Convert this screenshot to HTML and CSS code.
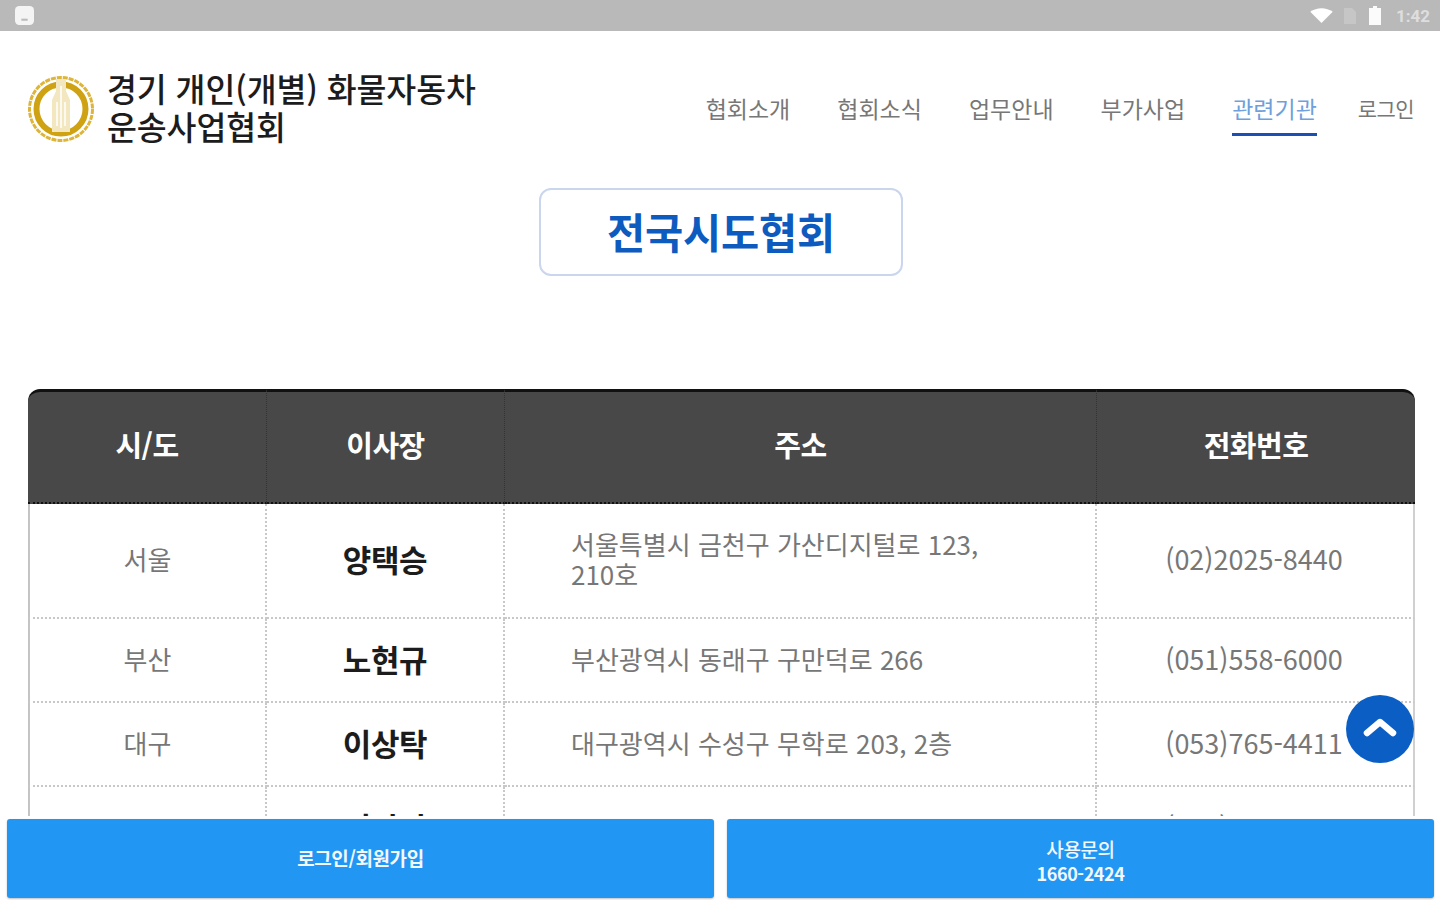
FILE: index.html
```html
<!DOCTYPE html>
<html lang="ko">
<head>
<meta charset="UTF-8">
<meta name="viewport" content="width=device-width, initial-scale=1.0">
<title>전국시도협회</title>
<link rel="stylesheet" href="styles.css">
</head>
<body>
<div class="status-bar">
  <svg class="status-app" viewBox="0 0 18 18"><rect x="0" y="0" width="18" height="18" rx="4" fill="#f4f4f4"/><rect x="6" y="12" width="6" height="2" fill="#bbb"/></svg>
  <div class="status-right">
    <svg class="status-wifi" viewBox="0 0 24 16"><path d="M0 4 C7 -1 17 -1 24 4 L12 16 Z" fill="#fff"/></svg>
    <svg class="status-sim" viewBox="0 0 14 16"><path d="M1 0 H9 L13 4 V16 H1 Z" fill="#c6c6c6"/></svg>
    <svg class="status-batt" viewBox="0 0 12 19"><path d="M4 0 H8 V2 H12 V19 H0 V2 H4 Z" fill="#fbfbfb"/></svg>
    <span class="status-time">1:42</span>
  </div>
</div>

<header class="header">
  <div class="brand">
    <svg class="logo" viewBox="0 0 66 66">
      <circle cx="33" cy="33" r="31.5" fill="none" stroke="#dcb53a" stroke-width="3" stroke-dasharray="5 1"/>
      <circle cx="33" cy="33" r="24.5" fill="#fff" stroke="#cfa214" stroke-width="6"/>
      <path d="M28 3 H38 V15 L42 24 V56 H24 V24 L28 15 Z" fill="#f3e7c0"/>
      <path d="M33 10 V52 M29 26 V50 M37 26 V50" stroke="#fff" stroke-width="1.5" fill="none"/>
    </svg>
    <h1 class="brand-name">경기 개인(개별) 화물자동차<br>운송사업협회</h1>
  </div>
  <nav class="nav">
    <a class="nav-item">협회소개</a>
    <a class="nav-item">협회소식</a>
    <a class="nav-item">업무안내</a>
    <a class="nav-item">부가사업</a>
    <a class="nav-item active">관련기관</a>
    <a class="nav-item login">로그인</a>
  </nav>
</header>

<main class="content">
  <div class="title-wrap">
    <h2 class="page-title">전국시도협회</h2>
  </div>
  <table class="assoc-table">
    <colgroup>
      <col class="col-region"><col class="col-name"><col class="col-addr"><col class="col-tel">
    </colgroup>
    <thead>
      <tr><th>시/도</th><th>이사장</th><th>주소</th><th>전화번호</th></tr>
    </thead>
    <tbody>
      <tr class="row-tall">
        <td>서울</td><td class="name">양택승</td>
        <td class="addr">서울특별시 금천구 가산디지털로 123,<br>210호</td>
        <td class="tel">(02)2025-8440</td>
      </tr>
      <tr>
        <td>부산</td><td class="name">노현규</td>
        <td class="addr">부산광역시 동래구 구만덕로 266</td>
        <td class="tel">(051)558-6000</td>
      </tr>
      <tr>
        <td>대구</td><td class="name">이상탁</td>
        <td class="addr">대구광역시 수성구 무학로 203, 2층</td>
        <td class="tel">(053)765-4411</td>
      </tr>
      <tr>
        <td>인천</td><td class="name">이사장</td>
        <td class="addr"></td>
        <td class="tel">(032)000-0000</td>
      </tr>
    </tbody>
  </table>
  <button class="top-btn" aria-label="맨 위로">
    <svg viewBox="0 0 36 24" width="36" height="24"><path d="M5 16 L18 5 L31 16" fill="none" stroke="#fff" stroke-width="6.5" stroke-linecap="round" stroke-linejoin="round"/></svg>
  </button>
</main>

<footer class="bottom-bar">
  <a class="bottom-btn">로그인/회원가입</a>
  <a class="bottom-btn"><span class="btn-light">사용문의</span><br>1660-2424</a>
</footer>
</body>
</html>
```

FILE: styles.css
```css
html, body {
  margin: 0;
  height: 100%;
}
body {
  font-family: "Noto Sans CJK KR", "Noto Sans", sans-serif;
  background-color: #fff;
  display: flex;
  flex-direction: column;
  height: 900px;
  overflow: hidden;
}

/* status bar */
.status-bar {
  height: 31px;
  flex: none;
  background-color: #b9b9b9;
  display: flex;
  justify-content: space-between;
  align-items: center;
  padding: 0 10px 0 15px;
}
.status-app {
  width: 19px;
  height: 19px;
}
.status-right {
  display: flex;
  align-items: center;
}
.status-wifi {
  width: 23px;
  height: 15px;
}
.status-sim {
  width: 14px;
  height: 16px;
  margin-left: 10px;
}
.status-batt {
  width: 12px;
  height: 19px;
  margin-left: 12px;
}
.status-time {
  font-family: Roboto, sans-serif;
  font-size: 17px;
  font-weight: 700;
  color: #dedede;
  margin-left: 15px;
}

/* header */
.header {
  flex: none;
  height: 157px;
  box-sizing: border-box;
  display: flex;
  justify-content: space-between;
  padding: 38px 26px 0 28px;
}
.brand {
  display: flex;
  align-items: flex-start;
  gap: 13px;
  padding-top: 7px;
}
.logo {
  width: 66px;
  height: 66px;
  flex: none;
}
.brand-name {
  margin: -7px 0 0;
  font-size: 32.5px;
  line-height: 38px;
  font-weight: 500;
  color: #1c1c1c;
  letter-spacing: -0.1px;
}
.nav {
  display: flex;
  gap: 47px;
  padding-top: 23px;
  align-items: flex-start;
}
.nav-item {
  font-size: 23px;
  line-height: 32px;
  height: 44px;
  color: #777;
  box-sizing: border-box;
}
.nav-item.active {
  color: #6f9fdc;
  border-bottom: 3px solid #1a4fb4;
}
.nav-item.login {
  font-size: 21px;
  letter-spacing: -0.6px;
  margin-left: -6px;
}

/* content */
.content {
  flex: 1;
  min-height: 0;
  overflow: hidden;
  position: relative;
  padding: 0 25px 0 28px;
}
.title-wrap {
  display: flex;
  justify-content: center;
  margin-right: 1px;
  margin-bottom: 113px;
}
.page-title {
  margin: 0;
  width: 364px;
  height: 88px;
  box-sizing: border-box;
  border: 2px solid #c9d6ee;
  border-radius: 12px;
  text-align: center;
  font-size: 41.5px;
  line-height: 82px;
  font-weight: 700;
  color: #0e5bc0;
  letter-spacing: -0.2px;
}
.assoc-table {
  width: 1387px;
  table-layout: fixed;
  border-collapse: separate;
  border-spacing: 0;
  border-radius: 12px 12px 0 0;
  font-size: 26px;
  color: #777;
}
.col-region { width: 239px; }
.col-name { width: 238px; }
.col-addr { width: 592px; }
.assoc-table th {
  height: 115px;
  box-sizing: border-box;
  padding: 0 0 6px;
  background-color: #484848;
  color: #fff;
  font-size: 29px;
  font-weight: 700;
  letter-spacing: -0.5px;
  border-top: 3px solid #111;
  border-bottom: 2px dotted #111;
  border-right: 1px dotted #333;
}
.assoc-table th:first-child {
  border-top-left-radius: 12px;
}
.assoc-table th:last-child {
  border-top-right-radius: 12px;
  border-right: none;
}
.assoc-table td {
  height: 84px;
  box-sizing: border-box;
  text-align: center;
  border-bottom: 2px dotted #c8c8c8;
  border-right: 2px dotted #c8c8c8;
  line-height: 30px;
  padding: 0 0 3px;
}
.assoc-table td:first-child {
  border-left: 2px solid #c4c4c4;
}
.assoc-table td:last-child {
  border-right: 2px solid #d0d0d0;
}
.assoc-table .row-tall td {
  height: 115px;
}
.assoc-table .name {
  font-size: 31px;
  font-weight: 700;
  letter-spacing: -0.3px;
  color: #1c1c1c;
}
.assoc-table .addr {
  text-align: left;
  padding-left: 66px;
  padding-right: 40px;
}
.assoc-table .tel {
  font-size: 27px;
  padding-right: 2px;
}
.top-btn {
  position: absolute;
  right: 26px;
  top: 507px;
  width: 68px;
  height: 68px;
  padding: 0;
  border: none;
  border-radius: 50%;
  background-color: #0b5fc4;
  display: flex;
  align-items: center;
  justify-content: center;
}

/* bottom buttons */
.bottom-bar {
  flex: none;
  height: 84px;
  box-sizing: border-box;
  background-color: #fff;
  display: flex;
  gap: 13px;
  padding: 3px 6px 2px 7px;
}
.bottom-btn {
  flex: 1;
  display: block;
  align-self: stretch;
  box-sizing: border-box;
  background-color: #2196f3;
  border-radius: 3px;
  box-shadow: 0 1px 2px rgba(0, 0, 0, 0.25);
  color: #f2f8fe;
  text-align: center;
  font-size: 18px;
  line-height: 24px;
  font-weight: 700;
  letter-spacing: -0.4px;
  padding-top: 18px;
}
.bottom-btn:first-child {
  font-size: 19px;
  padding-top: 27px;
}
.btn-light {
  font-size: 19px;
  font-weight: 500;
}
```
